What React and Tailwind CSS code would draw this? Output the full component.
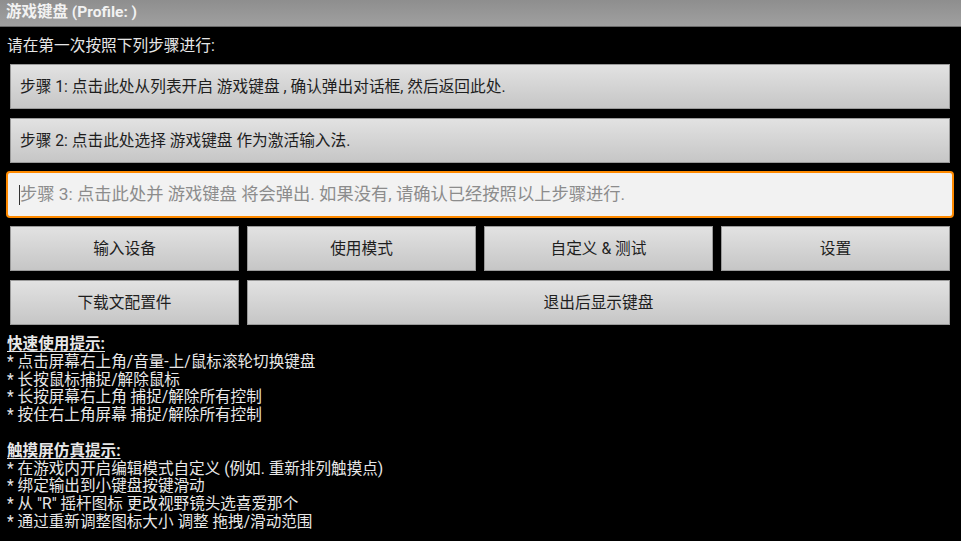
import React from "react";

const font = { fontFamily: '"Roboto", "Noto Sans CJK SC", sans-serif' };

function Btn({ children, className = "" }) {
  return (
    <div
      className={
        "h-[45px] flex items-center border border-[#9a9a9a] bg-gradient-to-b from-[#e2e2e2] to-[#c6c6c6] text-[15.7px] text-[#1e1e1e] " +
        className
      }
    >
      {children}
    </div>
  );
}

export default function App() {
  const quick = [
    "* 点击屏幕右上角/音量-上/鼠标滚轮切换键盘",
    "* 长按鼠标捕捉/解除鼠标",
    "* 长按屏幕右上角 捕捉/解除所有控制",
    "* 按住右上角屏幕 捕捉/解除所有控制",
  ];
  const touch = [
    "* 在游戏内开启编辑模式自定义 (例如. 重新排列触摸点)",
    "* 绑定输出到小键盘按键滑动",
    '* 从 "R" 摇杆图标 更改视野镜头选喜爱那个',
    "* 通过重新调整图标大小 调整 拖拽/滑动范围",
  ];
  return (
    <div
      className="w-[961px] h-[541px] bg-black overflow-hidden flex flex-col"
      style={font}
    >
      <div className="h-[27px] shrink-0 bg-gradient-to-b from-[#8e8e8e] to-[#a0a0a0] border-b border-[#6a6a6a] flex items-center px-[6px] text-[15.5px] font-bold text-[#f2f2f2]">
        游戏键盘 (Profile: )
      </div>
      <div className="h-[37px] shrink-0 flex items-center px-[7px] text-[15.7px] text-[#e6e6e6]">
        请在第一次按照下列步骤进行:
      </div>
      <div className="flex flex-col gap-[9px] pl-[10px] pr-[11px]">
        <Btn className="px-[9px]">
          步骤 1: 点击此处从列表开启 游戏键盘 , 确认弹出对话框, 然后返回此处.
        </Btn>
        <Btn className="px-[9px]">步骤 2: 点击此处选择 游戏键盘 作为激活输入法.</Btn>
        <div className="-mx-[4px] -mt-[1px] h-[47px] rounded-[4px] border-2 border-[#ff8a00] bg-[#f2f2f2] flex items-center pl-[11px] text-[17.3px] text-[#8c8c8c]">
          <span className="w-[1px] h-[20px] bg-[#333]"></span>
          步骤 3: 点击此处并 游戏键盘 将会弹出. 如果没有, 请确认已经按照以上步骤进行.
        </div>
        <div className="grid grid-cols-4 gap-x-[8px] gap-y-[9px] -mt-[1px]">
          <Btn className="justify-center">输入设备</Btn>
          <Btn className="justify-center">使用模式</Btn>
          <Btn className="justify-center">自定义 &amp; 测试</Btn>
          <Btn className="justify-center">设置</Btn>
          <Btn className="justify-center">下载文配置件</Btn>
          <Btn className="justify-center col-span-3">退出后显示键盘</Btn>
        </div>
      </div>
      <div className="px-[7px] pt-[11px] text-[15.6px] leading-[17.8px] text-[#e8e8e8]">
        <div className="font-bold underline underline-offset-2">快速使用提示:</div>
        {quick.map((t) => (
          <div key={t}>{t}</div>
        ))}
        <div className="h-[17.8px]"></div>
        <div className="font-bold underline underline-offset-2">触摸屏仿真提示:</div>
        {touch.map((t) => (
          <div key={t}>{t}</div>
        ))}
      </div>
    </div>
  );
}
